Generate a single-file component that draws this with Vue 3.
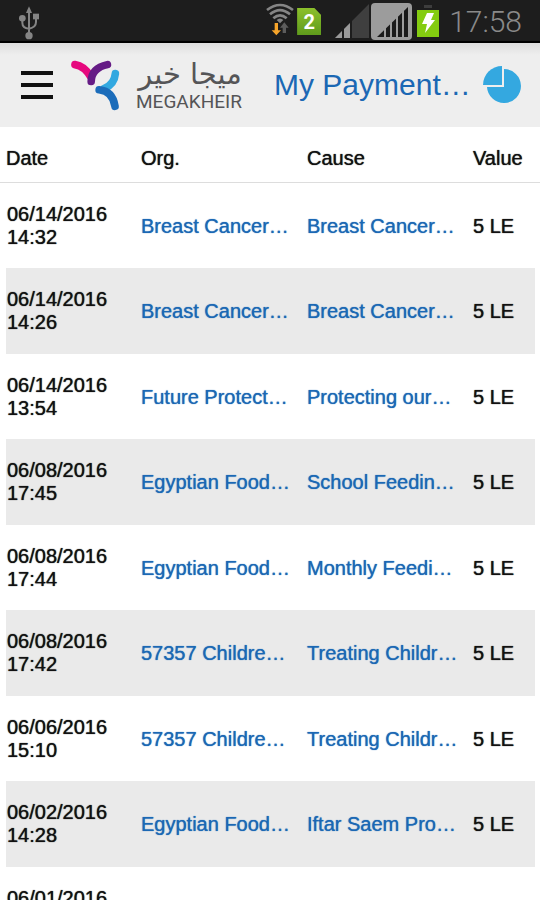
<template>
  <div class="page">
    <!-- Device status bar -->
    <div class="status">
      <svg class="usb" width="22" height="34" viewBox="0 0 66 102" fill="none" stroke="#858585" stroke-width="6">
        <path d="M33 86V16M13 38v12q0 16 20 18M54 34v14q0 16-21 20" />
        <path d="M33 1l9 20H24z" fill="#858585" stroke="none" />
        <circle cx="13" cy="37" r="10" fill="#858585" stroke="none" />
        <path d="M45 23h18v17H45z" fill="#858585" stroke="none" />
        <circle cx="33" cy="89" r="11" fill="#858585" stroke="none" />
      </svg>

      <div class="status-icons">
        <svg width="28" height="34" viewBox="0 0 84 102">
          <g fill="none" stroke="#858585" stroke-width="8">
            <path d="M3 21Q42-9 81 21" />
            <path d="M12 34Q42 9 72 34" />
            <path d="M22 46Q42 28 62 46" />
          </g>
          <path d="M32 51q10-9 20 0l-10 10z" fill="#858585" />
          <path d="M26 60h10v22h9L31 97 17 82h9z" fill="#f7a52b" />
          <path d="M50 90V74h-8l13-16 13 16h-8v16z" fill="#5c5c5c" />
        </svg>
        <div class="sim">2</div>
        <svg class="signal" width="34" height="34" viewBox="0 0 34 34">
          <path d="M34 0v34H0z" fill="#3f3f3f" />
          <path d="M16 18v16H0z" fill="#9a9a9a" />
          <path d="M8 24v10M16 17v17" stroke="#1d1d1d" stroke-width="2" />
        </svg>
        <svg class="signal-box" width="41" height="37" viewBox="0 0 41 37">
          <rect x="0" y="0" width="41" height="37" rx="4" fill="#9c9c9c" />
          <path d="M37 4v30H6z" fill="#1a1a1a" />
          <path d="M14 23v11M20 17v17M26 11v23M32 5v29" stroke="#9c9c9c" stroke-width="2" />
        </svg>
        <svg class="battery" width="22" height="33" viewBox="0 0 22 33">
          <path d="M7 1h8v3H7z" fill="#3d3d3d" />
          <path d="M0 6h22v27H0z" fill="#84cc10" />
          <path d="M10 9h7l-3 7h4L8 29l2-9H5z" fill="#fff" />
        </svg>
        <span class="clock">17:58</span>
      </div>
    </div>

    <!-- App bar -->
    <header class="bar">
      <button class="menu" type="button" aria-label="Menu">
        <span></span>
        <span></span>
        <span></span>
      </button>

      <a class="brand" href="#" @click.prevent>
        <svg width="49" height="51" viewBox="214 178 148 154" fill="none" stroke-width="23" stroke-linecap="round">
          <path d="M226 192Q254 196 273 228" stroke="#e6087e" />
          <path d="M324 192Q276 202 275 243" stroke="#651b85" />
          <path d="M348 219Q345 252 314 264" stroke="#32a8e0" />
          <path d="M299 268Q340 272 347 318" stroke="#1b6cba" />
        </svg>
        <span class="brand-text">
          <span class="brand-ar" lang="ar" dir="rtl">ميجا خير</span>
          <span class="brand-en">MEGAKHEIR</span>
        </span>
      </a>

      <h1>My Payment…</h1>

      <button class="chart" type="button" aria-label="Chart">
        <svg width="39" height="38" viewBox="0 0 39 38" fill="#34a8e0">
          <path d="M21 3A17 17 0 1 1 4 21H21z" />
          <path d="M19 0v19H0A19 19 0 0 1 19 0z" />
        </svg>
      </button>
    </header>

    <table class="payments">
      <colgroup>
        <col class="col-date" />
        <col />
        <col />
        <col class="col-value" />
      </colgroup>
      <thead>
        <tr>
          <th scope="col">Date</th>
          <th scope="col">Org.</th>
          <th scope="col">Cause</th>
          <th scope="col">Value</th>
        </tr>
      </thead>
      <tbody>
        <tr v-for="(p, i) in payments" :key="i">
          <td>{{ p.date }}<br />{{ p.time }}</td>
          <td><a href="#" @click.prevent>{{ p.org }}</a></td>
          <td><a href="#" @click.prevent>{{ p.cause }}</a></td>
          <td>{{ p.value }}</td>
        </tr>
      </tbody>
    </table>
  </div>
</template>

<script setup>
import { ref } from "vue";

const payments = ref([
  { date: "06/14/2016", time: "14:32", org: "Breast Cancer…", cause: "Breast Cancer…", value: "5 LE" },
  { date: "06/14/2016", time: "14:26", org: "Breast Cancer…", cause: "Breast Cancer…", value: "5 LE" },
  { date: "06/14/2016", time: "13:54", org: "Future Protect…", cause: "Protecting our…", value: "5 LE" },
  { date: "06/08/2016", time: "17:45", org: "Egyptian Food…", cause: "School Feedin…", value: "5 LE" },
  { date: "06/08/2016", time: "17:44", org: "Egyptian Food…", cause: "Monthly Feedi…", value: "5 LE" },
  { date: "06/08/2016", time: "17:42", org: "57357 Childre…", cause: "Treating Childr…", value: "5 LE" },
  { date: "06/06/2016", time: "15:10", org: "57357 Childre…", cause: "Treating Childr…", value: "5 LE" },
  { date: "06/02/2016", time: "14:28", org: "Egyptian Food…", cause: "Iftar Saem Pro…", value: "5 LE" },
  { date: "06/01/2016", time: "", org: "", cause: "", value: "" },
]);
</script>

<style>
body{
  margin:0;
  background:#fff;
}
</style>

<style scoped>
.page{
  height: 100vh;
  overflow:hidden;
  background:#fff;
  color:#111;
  font-family: "Liberation Sans", Arial, sans-serif;
  font-size: 20px;
}

.status{
  display:flex;
  justify-content:space-between;
  height: 41px;
  padding: 0 18px;
  background:#1d1d1d;
  border-bottom: 2px solid #000;
}
.usb{
  margin-top: 6px;
}

.status-icons{
  display:flex;
  align-items:flex-start;
  padding-top: 3px;
}
.sim{
  width: 24px;
  height: 27px;
  margin: 5px 14px 0 3px;
  background: linear-gradient(#8cc02c, #5f9b1c);
  clip-path: polygon(0 0, 72% 0, 100% 26%, 100% 100%, 0 100%);
  color:#fff;
  font-family: Roboto, sans-serif;
  font-size: 20px;
  font-weight: 700;
  line-height: 28px;
  text-align:center;
}
.signal{
  margin: 1px 2px 0 0;
}
.signal-box{
  margin-right: 5px;
}
.battery{
  margin: 1px 10px 0 0;
}
.clock{
  color:#8a8a8a;
  font-family: Roboto, sans-serif;
  font-size: 30px;
  font-weight: 300;
  line-height: 37px;
}

.bar{
  display:flex;
  align-items:center;
  height: 84px;
  padding: 0 18px 0 21px;
  box-sizing:border-box;
  background: linear-gradient(#dedede, #eee 12px);
}

.menu{
  display:flex;
  flex-direction:column;
  gap: 8px;
  width: 32px;
  margin-right: 18px;
  padding:0;
  border:none;
  background:none;
  cursor:pointer;
}
.menu span{
  height: 4px;
  background:#111;
}

.brand{
  display:flex;
  align-items:center;
  gap: 16px;
  width: 203px;
  color:#555557;
  text-decoration:none;
}
.brand-text{
  display:flex;
  flex-direction:column;
  white-space:nowrap;
}
.brand-ar{
  font-family: "DejaVu Sans", sans-serif;
  font-size: 29px;
  line-height: 34px;
}
.brand-en{
  font-family: Roboto, sans-serif;
  font-size: 19px;
  line-height: 22px;
}

h1{
  flex:1;
  min-width:0;
  margin:0;
  color:#1b68b4;
  font-size: 30px;
  font-weight: 400;
  line-height: 34px;
  white-space:nowrap;
}

.chart{
  padding:0;
  border:none;
  background:none;
  cursor:pointer;
}
.chart svg{
  display:block;
}

.payments{
  width:100%;
  table-layout:fixed;
  border-collapse:separate;
  border-spacing:0;
  line-height: 23px;
  text-shadow: 0 0 1px currentColor;
}
.col-date{ width: 135px; }
.col-value{ width: 73px; }

th{
  padding: 20px 0 12px 6px;
  border-bottom: 1px solid #ddd;
  font-weight: 400;
  text-align:left;
}
td{
  padding: 20px 0 19px 6px;
  background-clip: padding-box;
  white-space:nowrap;
}
td:first-child{
  padding-left: 1px;
  border-left: 6px solid transparent;
}
td:last-child{
  border-right: 5px solid transparent;
}
tbody tr:nth-child(even) td{
  padding-bottom: 20px;
  background-color:#eaeaea;
}
td a{
  color:#1b68b4;
  text-decoration:none;
  text-shadow: 0 0 1px currentColor;
}
</style>
